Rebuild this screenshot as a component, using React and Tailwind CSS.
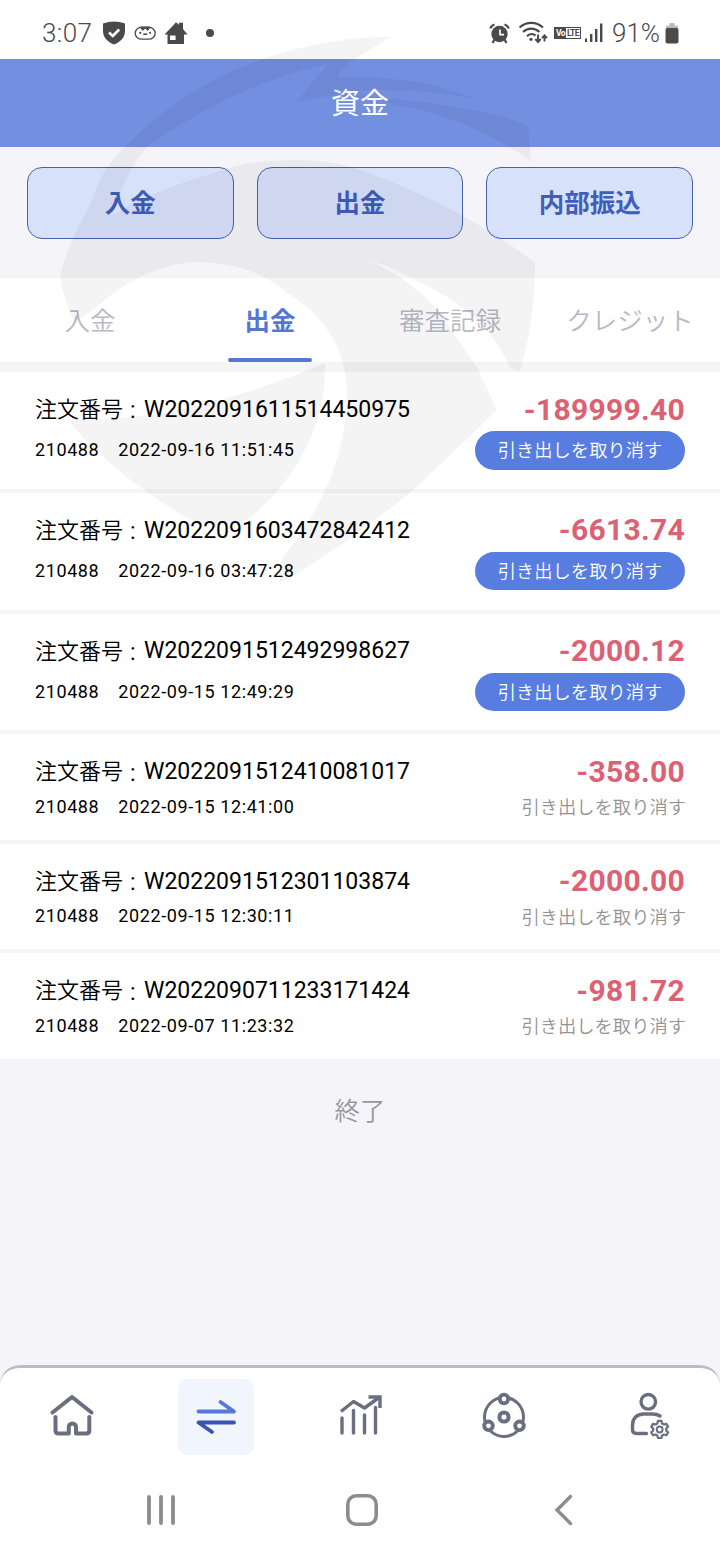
import { clsx } from 'clsx';

const actions = ['入金', '出金', '内部振込'];

const tabs = ['入金', '出金', '審査記録', 'クレジット'];

const orders = [
  { id: 'W2022091611514450975', account: '210488', time: '2022-09-16 11:51:45', amount: '-189999.40', pending: true },
  { id: 'W2022091603472842412', account: '210488', time: '2022-09-16 03:47:28', amount: '-6613.74', pending: true },
  { id: 'W2022091512492998627', account: '210488', time: '2022-09-15 12:49:29', amount: '-2000.12', pending: true },
  { id: 'W2022091512410081017', account: '210488', time: '2022-09-15 12:41:00', amount: '-358.00', pending: false },
  { id: 'W2022091512301103874', account: '210488', time: '2022-09-15 12:30:11', amount: '-2000.00', pending: false },
  { id: 'W2022090711233171424', account: '210488', time: '2022-09-07 11:23:32', amount: '-981.72', pending: false },
];

function StatusBar() {
  return (
    <div className="flex h-[59px] items-center justify-between bg-white pt-[7px] pr-[41px] pl-[42px] text-[#4a4a4a]">
      <div className="flex items-center">
        <span className="w-[60px] text-[26px] leading-none font-[350] tracking-[0.400px]">3:07</span>
        <svg className="h-6 w-6" viewBox="0 0 24 24">
          <path d="M12 .5c3.500 0 7.500 .8 11 2v7.500c0 6.500-4.500 11-11 13.500C5.500 21 1 16.500 1 10V2.500C4.500 1.300 8.500 .5 12 .5z" fill="currentColor" />
          <path d="M7 11.500l3.800 3.500 6.400-6.500" fill="none" stroke="#fff" strokeWidth="2.600" />
        </svg>
        <svg className="ml-[8px] h-[15px] w-[23px]" viewBox="0 0 23 15" fill="none" stroke="currentColor">
          <rect x="1.200" y="1.200" width="20" height="12" rx="6.500" strokeWidth="1.300" />
          <path d="M6.500 1.200c.5 1.500 1.300 2.500 2.300 3.200L11.200 2.200l2.400 2.200c1-.7 1.800-1.700 2.300-3.200z" fill="currentColor" strokeWidth=".8" />
          <circle cx="6.300" cy="6.800" r=".7" fill="currentColor" />
          <circle cx="16" cy="6.800" r=".7" fill="currentColor" />
          <path d="M9.300 8.200h3.800" strokeWidth="1.600" />
        </svg>
        <svg className="ml-[7px] h-[23px] w-6" viewBox="0 0 24 23" fill="currentColor">
          <path d="M.5 12.500L11 1.500V.8h2.500v1.400h1.500V.8h4V7l4.500 5.500H20V22H3.500v-9.500z" />
          <rect x="6" y="13.500" width="5.600" height="4.500" fill="#fff" />
        </svg>
        <span className="ml-[18px] h-2 w-2 rounded-full bg-[#4a4a4a]" />
      </div>
      <div className="flex items-center">
        <svg className="h-[21px] w-[21px]" viewBox="0 0 21 21" fill="none" stroke="currentColor">
          <circle cx="10.500" cy="11" r="8.200" fill="currentColor" stroke="none" />
          <path d="M1.300 5.500C2 3.500 3.500 2 5.500 1.500M19.700 5.500C19 3.500 17.500 2 15.500 1.500M3.500 20l2-3.500M17.500 20l-2-3.500" strokeWidth="2.200" />
          <path d="M11 6.500v5.200h4" stroke="#fff" strokeWidth="1.700" />
        </svg>
        <svg className="ml-[8px] h-6 w-[31px]" viewBox="0 0 31 24" fill="none" stroke="currentColor" strokeWidth="2.200">
          <path d="M1.500 6.500c7-6.200 16.500-6.200 23.500 0M5 11c4.800-4.600 11.700-4.600 16.500 0M9 15.200c2.600-2.700 6-2.700 8.500-.6" />
          <circle cx="13" cy="18.300" r="1.600" fill="currentColor" stroke="none" />
          <path d="M20 13.500v7M17.300 18l2.700 3 2.700-3M26.500 20.500v-6M24 17.200l2.500-2.700 2.500 2.700" strokeWidth="1.900" />
        </svg>
        <span className="ml-[5px] flex h-[12px] w-[27px] items-center border border-[#4a4a4a] text-[8.500px] leading-none font-bold">
          <span className="flex h-full w-[11px] items-center justify-center bg-[#4a4a4a] tracking-[-0.500px] text-white">Vo</span>
          <span className="w-[14px] text-center tracking-[-0.600px]">LTE</span>
        </span>
        <svg className="ml-[3px] h-5 w-[19px]" viewBox="0 0 19 20" fill="currentColor">
          <rect x="1" y="15.500" width="2" height="3.500" />
          <rect x="6" y="11" width="2.400" height="8" />
          <rect x="11" y="6" width="2.400" height="13" />
          <rect x="16" y=".5" width="2.400" height="18.500" />
        </svg>
        <span className="ml-[9px] w-[53px] text-[26px] leading-none font-[350]">91%</span>
        <svg className="h-[21px] w-[14px]" viewBox="0 0 14 21">
          <path d="M4.500 0h5v3h-5z" fill="#bbb" />
          <rect x="1" y="2.500" width="12" height="4" rx="1" fill="#bbb" />
          <rect x=".5" y="5" width="13" height="15.500" rx="2" fill="currentColor" />
        </svg>
      </div>
    </div>
  );
}

function OrderRow({ order }) {
  return (
    <div
      className={clsx(
        'flex justify-between bg-white px-[35px] pt-[19px]',
        order.pending ? 'h-[116.800px]' : 'h-[105.500px]'
      )}
    >
      <div className="flex flex-col text-black">
        <div className="flex h-[37px] items-center whitespace-nowrap">
          <span className="w-[88px] text-[22px] font-[350]">注文番号</span>
          <span className="w-[21px] pt-[4px] pl-[7px] text-[23px]">:</span>
          <span className="pt-[1px] text-[23px]">{order.id}</span>
        </div>
        <div
          className={clsx(
            'flex items-center gap-[19px] text-[18px] tracking-[0.600px] whitespace-nowrap',
            order.pending ? 'mt-[3px] h-[37px]' : 'h-[32px]'
          )}
        >
          <span>{order.account}</span>
          <span>{order.time}</span>
        </div>
      </div>
      <div className="flex flex-col items-end">
        <span className="flex h-[36px] items-center text-[30px] font-bold tracking-[0.300px] text-[#dc6173]">
          {order.amount}
        </span>
        {order.pending ? (
          <button className="mt-[4px] h-[38.500px] w-[210px] rounded-full bg-[#587de0] pt-[1px] text-[18.300px] font-[350] text-white">
            引き出しを取り消す
          </button>
        ) : (
          <span className="mt-[2px] -mr-px flex h-[33px] items-center text-[18.300px] font-[350] text-[#939393]">
            引き出しを取り消す
          </span>
        )}
      </div>
    </div>
  );
}

function BottomNav() {
  return (
    <nav className="grid h-[99px] grid-cols-5 justify-items-center rounded-t-[20px] border-t-[3px] border-[#bdbdbf] bg-white pt-[11px] text-[#6b6e7f]">
      <button className="flex h-[76px] w-[76px] items-center justify-center pb-[4px]">
        <svg className="h-12 w-12" viewBox="0 0 48 48" fill="none" stroke="currentColor" strokeWidth="4" strokeLinecap="round" strokeLinejoin="round">
          <path d="M4.500 21.500L24 6l19.500 15.500" />
          <path d="M7.500 26V39.500q0 3 3 3h10.300v-6.500a3.600 3.600 0 0 1 7.200 0v6.500h10.300q3 0 3-3V26" />
        </svg>
      </button>
      <button className="flex h-[76px] w-[76px] items-center justify-center rounded-[10px] bg-[#f1f5fd] pb-[3px]">
        <svg className="h-12 w-12" viewBox="0 0 48 48" fill="none" strokeWidth="3.800" strokeLinecap="round" strokeLinejoin="round">
          <path d="M6.500 19.500H42L28.500 10" stroke="#5578db" />
          <path d="M42 30.500H6.500l13.500 9.500" stroke="#3a54b0" />
        </svg>
      </button>
      <button className="flex h-[76px] w-[76px] items-center justify-center pb-[4px]">
        <svg className="h-12 w-12" viewBox="0 0 48 48" fill="none" stroke="currentColor" strokeWidth="3.400">
          <path d="M5 20.500L17.500 10.500 28.500 17 43 6.500" strokeLinejoin="round" />
          <path d="M32.500 6H44v11" />
          <path d="M6 27v15M17.500 19.500v22.500M28.500 24v18M39.500 16.500V42" strokeLinecap="round" />
        </svg>
      </button>
      <button className="flex h-[76px] w-[76px] items-center justify-center pb-[4px]">
        <svg className="h-12 w-12" viewBox="0 0 48 48" fill="none" stroke="currentColor" strokeWidth="3.800">
          <circle cx="24" cy="26" r="19.500" strokeWidth="3" />
          <circle cx="24" cy="26" r="4.600" strokeWidth="4" />
          <circle cx="24" cy="8" r="4.300" fill="#fff" />
          <circle cx="8.500" cy="34.800" r="4.300" fill="#fff" />
          <circle cx="39.500" cy="34.800" r="4.300" fill="#fff" />
        </svg>
      </button>
      <button className="flex h-[76px] w-[76px] items-center justify-center pb-[4px]">
        <svg className="h-12 w-12" viewBox="0 0 48 48" fill="none" stroke="currentColor" strokeWidth="3.400" strokeLinecap="round" strokeLinejoin="round">
          <circle cx="24.300" cy="10.800" r="7.300" />
          <path d="M22.500 42.500H12.500c-2.500 0-4-1.600-4-4V34c0-6.500 4.500-11 11-11h9c3 0 5.500.6 7.500 2" />
          <path
            d="M33.300 31l.7-2.600h3.400l.7 2.600 1.800 1 2.500-.8 1.700 2.900-1.900 1.900v2l1.900 1.900-1.700 2.900-2.500-.8-1.800 1-.7 2.600H34l-.7-2.600-1.800-1-2.500.8-1.700-2.900 1.900-1.900v-2l-1.900-1.900 1.700-2.900 2.500.8z"
            strokeWidth="2.200"
            transform="translate(0 1.500)"
          />
          <circle cx="35.700" cy="38.500" r="2.900" strokeWidth="2" />
        </svg>
      </button>
    </nav>
  );
}

function SystemNav() {
  return (
    <div className="flex h-[96px] items-center bg-white pb-[4px] pl-[145px] text-[#8c8c8c]">
      <svg className="h-8 w-8" viewBox="0 0 32 32" stroke="currentColor" strokeWidth="3.800" strokeLinecap="round">
        <path d="M4 3v26M16 3v26M28 3v26" />
      </svg>
      <svg className="ml-[169px] h-8 w-8" viewBox="0 0 32 32" fill="none" stroke="currentColor" strokeWidth="3.600">
        <rect x="1.800" y="1.800" width="28.400" height="28.400" rx="8.500" />
      </svg>
      <svg className="ml-[175px] h-8 w-[22px]" viewBox="0 0 22 32" fill="none" stroke="currentColor" strokeWidth="3.400" strokeLinecap="round">
        <path d="M17.500 2.500L4 16l13.500 13.500" />
      </svg>
    </div>
  );
}

// faint eagle-eye mark laid over the upper half of the screen
function Watermark() {
  return (
    <svg className="pointer-events-none absolute top-0 left-0 h-[600px] w-[720px]" viewBox="0 0 720 600" fill="#000" fillOpacity="0.042">
      <path
        d="M92 200C100 175 112 158 127 145C165 105 215 75 263 59C305 44 350 37 390 37L352 61C344 67 339 72 338 77C400 76 440 84 475 99C430 90 385 88 345 92C400 102 480 104 528 126L531 161C490 132 440 112 400 106C360 94 330 92 295 103L328 64C260 78 190 115 147 147C133 162 122 185 113 215C140 197 175 185 213 173C240 162 270 160 300 160C340 160 370 172 417 193C460 213 500 235 535 263C536 300 528 345 520 372L510 367C495 335 475 315 447 297C420 282 395 268 363 258C400 272 435 300 453 333L477 367L497 410L417 487C370 525 330 555 280 583C278 575 280 565 283 557C325 505 347 450 347 393C346 345 320 312 287 293C260 270 230 262 193 262C155 265 120 285 97 307L75 322C68 310 62 290 60 278C65 250 80 225 92 200Z"
      />
      <path d="M67 419C150 425 250 395 325 363C327 425 295 482 247 520C225 528 205 526 190 520C140 490 95 455 67 419Z" />
    </svg>
  );
}

export default function App() {
  const activeTab = 1;

  return (
    <div className="relative flex h-[1560px] w-[720px] flex-col overflow-hidden bg-[#f4f4f9] font-[Roboto,'Noto_Sans_CJK_JP',sans-serif]">
      <StatusBar />
      <header className="flex h-[88px] items-center justify-center bg-[#738fe0] pt-[3px] text-[29px] text-white">
        資金
      </header>

      <div className="grid h-[131px] grid-cols-3 gap-[23px] px-[27px] pt-[20px]">
        {actions.map((label) => (
          <button
            key={label}
            className="h-[72px] rounded-[15px] border border-[#4561ad] bg-[#d8e1fa] pt-[1px] text-[25.500px] font-bold text-[#3f5eba]"
          >
            {label}
          </button>
        ))}
      </div>

      <div className="grid h-[84px] grid-cols-4 bg-white">
        {tabs.map((tab, index) => (
          <div
            key={tab}
            className={clsx(
              'flex flex-col items-center text-[25.500px] whitespace-nowrap',
              index === activeTab ? 'font-bold text-[#5577d2]' : 'font-[350] text-[#b7b9c5]'
            )}
          >
            <span className="flex h-[80px] items-center pt-[6px]">{tab}</span>
            {index === activeTab && <span className="h-1 w-[84px] rounded-sm bg-[#5577d2]" />}
          </div>
        ))}
      </div>

      <div className="flex flex-col gap-[4px] bg-[#f5f5f7] pt-[10px]">
        {orders.map((order) => (
          <OrderRow key={order.id} order={order} />
        ))}
      </div>

      <p className="pt-[33px] text-center text-[25.500px] font-[350] text-[#97979c]">終了</p>

      <div className="mt-auto">
        <BottomNav />
        <SystemNav />
      </div>
      <Watermark />
    </div>
  );
}
